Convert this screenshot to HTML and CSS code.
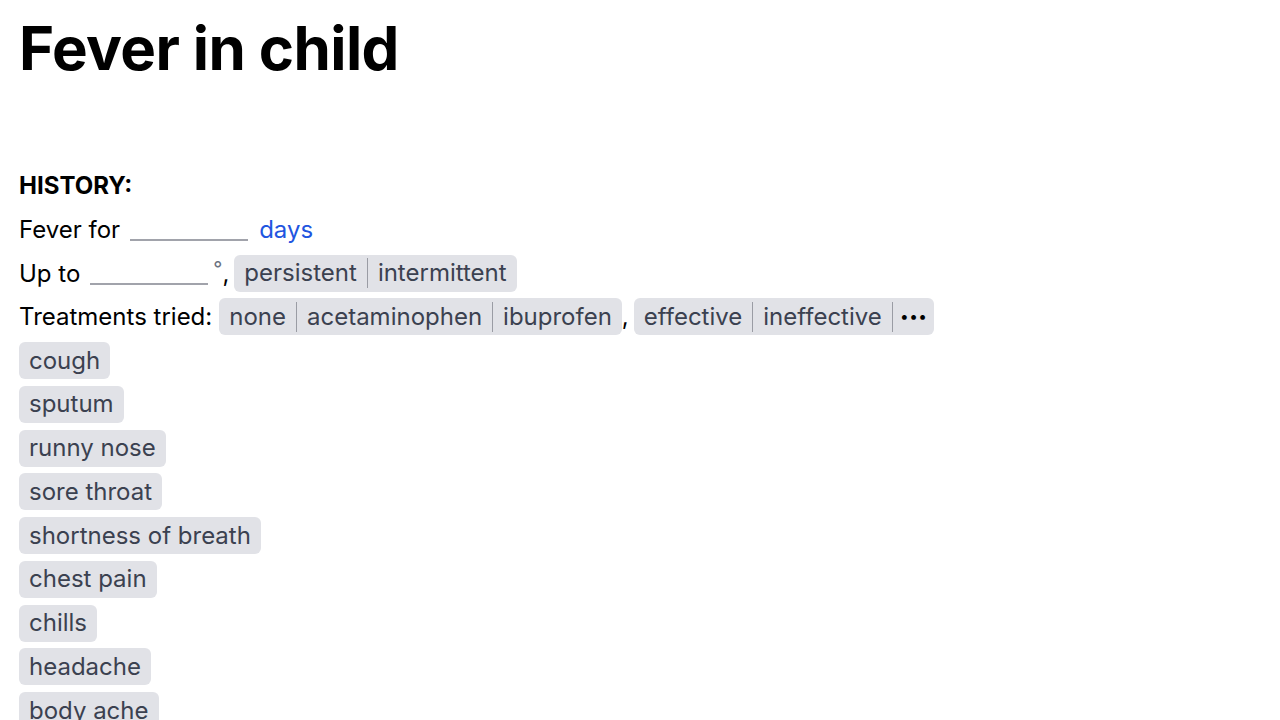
FILE: index.html
```html
<!DOCTYPE html>
<html>
<head>
<meta charset="utf-8">
<link rel="stylesheet" href="styles.css">
</head>
<body>
<main class="page">
  <h1 class="title">Fever in child</h1>
  <section class="section">
    <div class="row heading">HISTORY:</div>
    <div class="row">
      <span class="label">Fever for</span>
      <span class="blank"></span>
      <span class="unit">days</span>
    </div>
    <div class="row">
      <span class="label">Up to</span>
      <span class="blank blank-short"></span>
      <span class="deg">°</span><span class="comma">,</span>
      <span class="chip"><span class="seg">persistent</span><span class="seg">intermittent</span></span>
    </div>
    <div class="row">
      <span class="label">Treatments tried:</span>
      <span class="chip"><span class="seg">none</span><span class="seg">acetaminophen</span><span class="seg">ibuprofen</span></span><span class="comma">,</span>
      <span class="chip"><span class="seg">effective</span><span class="seg">ineffective</span><span class="seg more">&middot;&middot;&middot;</span></span>
    </div>
    <div class="row"><span class="chip"><span class="seg">cough</span></span></div>
    <div class="row"><span class="chip"><span class="seg">sputum</span></span></div>
    <div class="row"><span class="chip"><span class="seg">runny nose</span></span></div>
    <div class="row"><span class="chip"><span class="seg">sore throat</span></span></div>
    <div class="row"><span class="chip"><span class="seg">shortness of breath</span></span></div>
    <div class="row"><span class="chip"><span class="seg">chest pain</span></span></div>
    <div class="row"><span class="chip"><span class="seg">chills</span></span></div>
    <div class="row"><span class="chip"><span class="seg">headache</span></span></div>
    <div class="row"><span class="chip"><span class="seg">body ache</span></span></div>
  </section>
</main>
</body>
</html>
```

FILE: styles.css
```css
html, body {
  margin: 0;
  padding: 0;
  background: #ffffff;
}
body {
  font-family: Inter, "Noto Sans", sans-serif;
  color: #000000;
}
.page {
  padding: 12px 19px 0 19px;
}
.title {
  margin: 0;
  font-size: 60px;
  font-weight: 700;
  line-height: 72px;
  letter-spacing: -0.6px;
}
.section {
  margin-top: 83px;
  font-size: 24px;
}
.row {
  display: flex;
  align-items: center;
  height: 37px;
  margin-bottom: 6.75px;
  white-space: nowrap;
}
.heading {
  font-weight: 700;
  font-size: 24px;
}
.label {
  margin-right: 7px;
}
.blank {
  display: inline-block;
  width: 118px;
  height: 22px;
  border-bottom: 2px solid #a1a3ab;
  margin-left: 3px;
  margin-right: 11px;
  align-self: flex-start;
  margin-top: 6px;
}
.blank-short {
  margin-right: 5px;
}
.unit {
  color: #2155e0;
}
.deg {
  color: #6b7280;
  font-size: 20px;
  align-self: flex-start;
  margin-top: 2px;
}
.comma {
  margin-right: 5px;
}
.chip {
  display: inline-flex;
  align-items: center;
  height: 37px;
  background: #e1e2e7;
  border-radius: 6px;
  color: #3b4150;
}
.seg {
  padding: 0 10px;
  line-height: 30px;
  border-left: 1px solid #9a9ca4;
}
.seg:first-child {
  border-left: none;
}
.more {
  padding: 0 7px;
  color: #000;
  font-weight: 800;
  font-size: 26px;
  letter-spacing: 0px;
}
```
